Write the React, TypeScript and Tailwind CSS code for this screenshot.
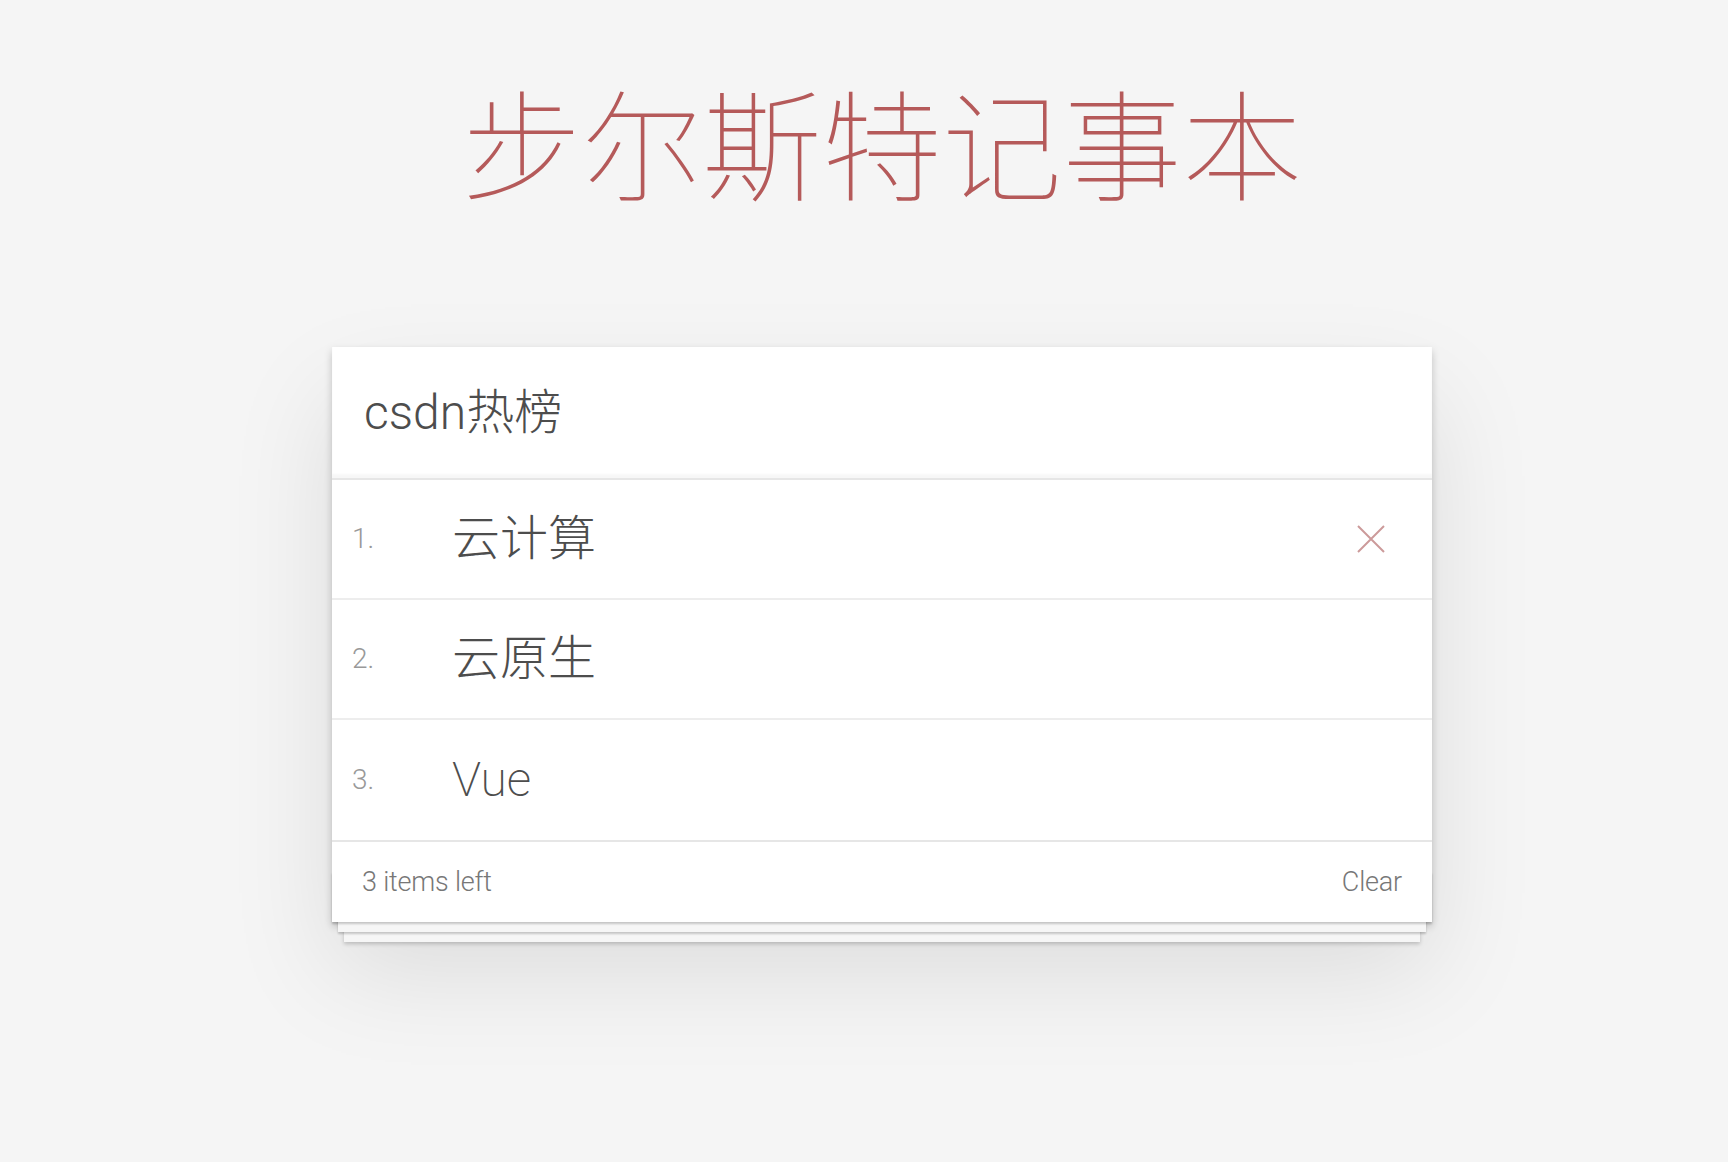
import React, { useState } from 'react';

type Todo = { id: number; title: string };

const initialTodos: Todo[] = [
  { id: 1, title: '云计算' },
  { id: 2, title: '云原生' },
  { id: 3, title: 'Vue' },
];

const font = { fontFamily: 'Roboto, "Noto Sans CJK SC", "Liberation Sans", sans-serif' };

export default function App() {
  const [todos, setTodos] = useState<Todo[]>(initialTodos);
  const [hovered, setHovered] = useState<number | null>(1);

  return (
    <div className="min-h-screen bg-[#f5f5f5] pl-[36px] text-[#4d4d4d] font-light" style={font}>
      <div className="mx-auto flex w-[1100px] flex-col items-center">
        {/* Title */}
        <h1 className="mt-[91px] text-[120px] leading-none font-thin tracking-normal text-[#b55a5a]">
          步尔斯特记事本
        </h1>

        {/* Card */}
        <section className="relative mt-[136px] w-full bg-white shadow-[0_4px_8px_0_rgba(0,0,0,0.2),0_50px_100px_0_rgba(0,0,0,0.1)]">
          <header className="flex h-[131px] items-center pl-[32px] text-[48px] text-[#4d4d4d] shadow-[inset_0_-4px_2px_rgba(0,0,0,0.03)]">
            csdn热榜
          </header>

          <ul className="border-t-2 border-[#e6e6e6]">
            {todos.map((todo, i) => (
              <li
                key={todo.id}
                onMouseEnter={() => setHovered(todo.id)}
                className="flex h-[120px] items-center border-b-2 border-[#ededed] last:border-b-0"
              >
                <span className="w-[120px] pl-[20px] text-[28px] text-[#999]">{i + 1}.</span>
                <span className="flex-1 text-[48px] font-extralight text-[#4d4d4d]">{todo.title}</span>
                {hovered === todo.id && (
                  <button
                    onClick={() => setTodos(todos.filter((t) => t.id !== todo.id))}
                    className="mr-[46px] flex h-[30px] w-[30px] items-center justify-center"
                  >
                    <svg width="28" height="28" viewBox="0 0 28 28" fill="none" stroke="#cc9a9a" strokeWidth="2">
                      <path d="M1 1L27 27M27 1L1 27" />
                    </svg>
                  </button>
                )}
              </li>
            ))}
          </ul>

          <footer className="relative flex h-[82px] items-center justify-between border-t-2 border-[#e6e6e6] px-[30px] text-[27px] tracking-[-0.2px] text-[#777]">
            <div className="pointer-events-none absolute inset-x-0 bottom-0 h-[50px] shadow-[0_2px_2px_rgba(0,0,0,0.2),0_16px_0_-6px_#f6f6f6,0_18px_2px_-6px_rgba(0,0,0,0.2),0_32px_0_-12px_#f6f6f6,0_34px_4px_-12px_rgba(0,0,0,0.2)]" />
            <span className="relative">{todos.length} items left</span>
            <button className="relative text-[#777]" onClick={() => setTodos([])}>
              Clear
            </button>
          </footer>
        </section>
      </div>
    </div>
  );
}
